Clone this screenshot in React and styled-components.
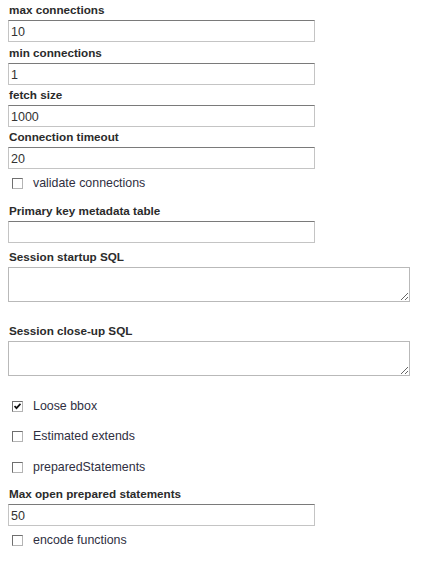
import React from 'react';
import styled, { createGlobalStyle } from 'styled-components';

const GlobalStyle = createGlobalStyle`
  html, body {
    margin: 0;
    padding: 0;
    background: #ffffff;
  }
  body {
    font-family: "Liberation Sans", Arial, sans-serif;
    color: #333;
  }
`;

const Form = styled.form`
  padding: 2px 8px 0;
  display: flex;
  flex-direction: column;
`;

const Field = styled.div`
  display: flex;
  flex-direction: column;
  margin-top: ${p => p.top || 0}px;
`;

const Label = styled.label`
  font-size: 11.7px;
  font-weight: bold;
  line-height: 16px;
  color: #2b2b2b;
  margin-bottom: 2px;
  padding-left: 1px;
`;

const TextInput = styled.input`
  box-sizing: border-box;
  width: 307px;
  height: 22px;
  margin: 0;
  padding: 1px 2px 0;
  border: 1px solid #c4c4c4;
  border-top-color: #7a7a7a;
  font-family: "Liberation Sans", Arial, sans-serif;
  font-size: 12.5px;
  color: #333;
  background: #fff;
  outline: none;
`;

const TextArea = styled.textarea`
  box-sizing: border-box;
  width: 402px;
  height: 35px;
  margin: 0;
  padding: 2px 3px;
  border: 1px solid #b9b9b9;
  font-family: "Liberation Sans", Arial, sans-serif;
  font-size: 12.5px;
  color: #333;
  resize: vertical;
  outline: none;
`;

const CheckRow = styled.label`
  display: flex;
  align-items: center;
  height: ${p => p.h || 30}px;
  padding-left: 4px;
  margin-top: ${p => p.top || 0}px;
  font-size: 12.4px;
  color: #2f2f3f;
`;

const Box = styled.span`
  box-sizing: border-box;
  width: 11px;
  height: 11px;
  border: 1px solid #6f6f6f;
  border-right-color: #b4b4b4;
  border-bottom-color: #b4b4b4;
  background: #fff;
  display: flex;
  align-items: center;
  justify-content: center;
  margin-right: 10px;
`;

const Check = ({ checked, children, top, h }) => (
  <CheckRow top={top} h={h}>
    <Box>
      {checked && (
        <svg width="7" height="7" viewBox="0 0 7 7">
          <path d="M0.5 3 L2.5 5.2 L6.5 0.8" stroke="#111" strokeWidth="1.8" fill="none" />
        </svg>
      )}
    </Box>
    {children}
  </CheckRow>
);

const App = () => (
  <>
    <GlobalStyle />
    <Form>
      <Field>
        <Label>max connections</Label>
        <TextInput defaultValue="10" />
      </Field>
      <Field top={3}>
        <Label>min connections</Label>
        <TextInput defaultValue="1" />
      </Field>
      <Field top={2}>
        <Label>fetch size</Label>
        <TextInput defaultValue="1000" />
      </Field>
      <Field top={2}>
        <Label>Connection timeout</Label>
        <TextInput defaultValue="20" />
      </Field>
      <Check h={28}>validate connections</Check>
      <Field top={6}>
        <Label>Primary key metadata table</Label>
        <TextInput defaultValue="" />
      </Field>
      <Field top={6}>
        <Label>Session startup SQL</Label>
        <TextArea />
      </Field>
      <Field top={21}>
        <Label>Session close-up SQL</Label>
        <TextArea />
      </Field>
      <Check top={15} checked>Loose bbox</Check>
      <Check>Estimated extends</Check>
      <Check top={1}>preparedStatements</Check>
      <Field top={4}>
        <Label>Max open prepared statements</Label>
        <TextInput defaultValue="50" />
      </Field>
      <Check h={28}>encode functions</Check>
    </Form>
  </>
);

export default App;
